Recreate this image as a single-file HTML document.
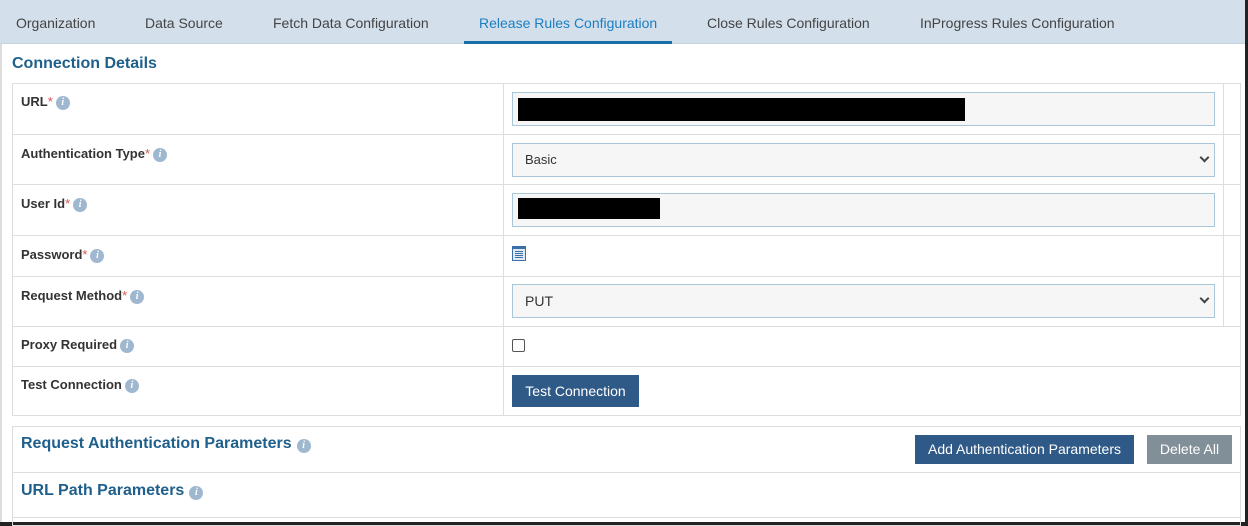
<!DOCTYPE html>
<html><head><style>
*{box-sizing:border-box;margin:0;padding:0}
body{width:1248px;height:526px;background:#fff;font-family:"Liberation Sans",Arial,sans-serif;position:relative;overflow:hidden;font-size:14px;color:#333}
.a{position:absolute}
.tabs{left:0;top:0;width:1248px;height:44px;background:#d3dfeb;border-bottom:1px solid #c5d3e0}
.tab{position:absolute;top:15px;font-size:14px;color:#444}
.h{font-weight:bold;color:#1f5f8b}
.lbl{position:absolute;left:21px;font-size:13px;font-weight:bold;color:#333}
.st{color:#d9534f;font-weight:normal}
.i{display:inline-block;width:14px;height:14px;border-radius:50%;background:#9fb8cf;color:#fff;font-size:10px;font-style:italic;font-weight:bold;text-align:center;line-height:14px;font-family:"Liberation Serif",serif;vertical-align:-1px;margin-left:3px;position:relative;top:-2px}
.h .i{margin-left:5px;top:-1px}
.hl{position:absolute;height:1px;background:#ddd}
.vl{position:absolute;width:1px;background:#ddd}
.inp{position:absolute;left:512px;width:703px;height:34px;background:#f6f6f6;border:1px solid #a9c7d8;font-size:13px;color:#333;padding:8px 12px}
.chev{position:absolute;right:6px;top:10px;width:7px;height:7px;border-right:2px solid #444;border-bottom:2px solid #444;transform:rotate(45deg)}
.btn{position:absolute;color:#fff;font-size:14px;text-align:center;line-height:30px}
</style></head><body>
<div class="a tabs"></div>
<div class="tab" style="left:16px">Organization</div>
<div class="tab" style="left:145px">Data Source</div>
<div class="tab" style="left:273px">Fetch Data Configuration</div>
<div class="tab" style="left:479px;color:#1b7fc1">Release Rules Configuration</div>
<div class="tab" style="left:707px">Close Rules Configuration</div>
<div class="tab" style="left:920px">InProgress Rules Configuration</div>
<div class="a" style="left:464px;top:41px;width:208px;height:3px;background:#1a6ea8"></div>
<div class="a" style="left:0;top:44px;width:2px;height:482px;background:#ddd"></div>
<div class="a" style="left:1245px;top:0;width:3px;height:526px;background:#222"></div>
<div class="a" style="left:0;top:522px;width:1248px;height:4px;background:#222"></div>
<div class="a h" style="left:12px;top:55px;font-size:16px">Connection Details</div>

<div class="a" style="left:12px;top:83px;width:1229px;height:333px;border:1px solid #ddd"></div>
<div class="vl" style="left:503px;top:83px;height:333px"></div>
<div class="vl" style="left:1223px;top:83px;height:243px"></div>
<div class="hl" style="left:12px;top:134px;width:1229px"></div>
<div class="hl" style="left:12px;top:184px;width:1229px"></div>
<div class="hl" style="left:12px;top:235px;width:1229px"></div>
<div class="hl" style="left:12px;top:276px;width:1229px"></div>
<div class="hl" style="left:12px;top:326px;width:1229px"></div>
<div class="hl" style="left:12px;top:366px;width:1229px"></div>

<div class="lbl" style="top:94px">URL<span class="st">*</span><span class="i">i</span></div>
<div class="lbl" style="top:146px">Authentication Type<span class="st">*</span><span class="i">i</span></div>
<div class="lbl" style="top:196px">User Id<span class="st">*</span><span class="i">i</span></div>
<div class="lbl" style="top:247px">Password<span class="st">*</span><span class="i">i</span></div>
<div class="lbl" style="top:288px">Request Method<span class="st">*</span><span class="i">i</span></div>
<div class="lbl" style="top:337px">Proxy Required<span class="i">i</span></div>
<div class="lbl" style="top:377px">Test Connection<span class="i">i</span></div>

<div class="inp" style="top:92px"></div>
<div class="a" style="left:518px;top:98px;width:447px;height:23px;background:#000"></div>
<div class="inp" style="top:143px">Basic<span class="chev"></span></div>
<div class="inp" style="top:193px"></div>
<div class="a" style="left:518px;top:198px;width:142px;height:21px;background:#000"></div>
<svg class="a" style="left:512px;top:246px" width="14" height="15" viewBox="0 0 14 15"><rect x="0.5" y="0.5" width="13" height="14" fill="#dfe9f3" stroke="#3a6fa8"/><rect x="1" y="1" width="12" height="2" fill="#3a6fa8"/><path d="M3 5.5h8M3 7.5h8M3 9.5h8M3 11.5h8" stroke="#3a6fa8"/></svg>
<div class="inp" style="top:284px;font-size:14px">PUT<span class="chev"></span></div>
<div class="a" style="left:512px;top:339px;width:13px;height:13px;border:1px solid #555;border-radius:2px"></div>
<div class="btn" style="left:512px;top:375px;width:127px;height:32px;background:#2f5986;line-height:32px">Test Connection</div>

<div class="a" style="left:12px;top:426px;width:1229px;height:100px;border:1px solid #ddd"></div>
<div class="hl" style="left:12px;top:472px;width:1229px"></div>
<div class="hl" style="left:12px;top:517px;width:1229px"></div>
<div class="a h" style="left:21px;top:435px;font-size:16px">Request Authentication Parameters<span class="i">i</span></div>
<div class="a h" style="left:21px;top:482px;font-size:16px">URL Path Parameters<span class="i">i</span></div>
<div class="btn" style="left:915px;top:435px;width:219px;height:29px;background:#2f5986;line-height:29px">Add Authentication Parameters</div>
<div class="btn" style="left:1147px;top:435px;width:85px;height:29px;background:#818f99;line-height:29px">Delete All</div>
</body></html>
